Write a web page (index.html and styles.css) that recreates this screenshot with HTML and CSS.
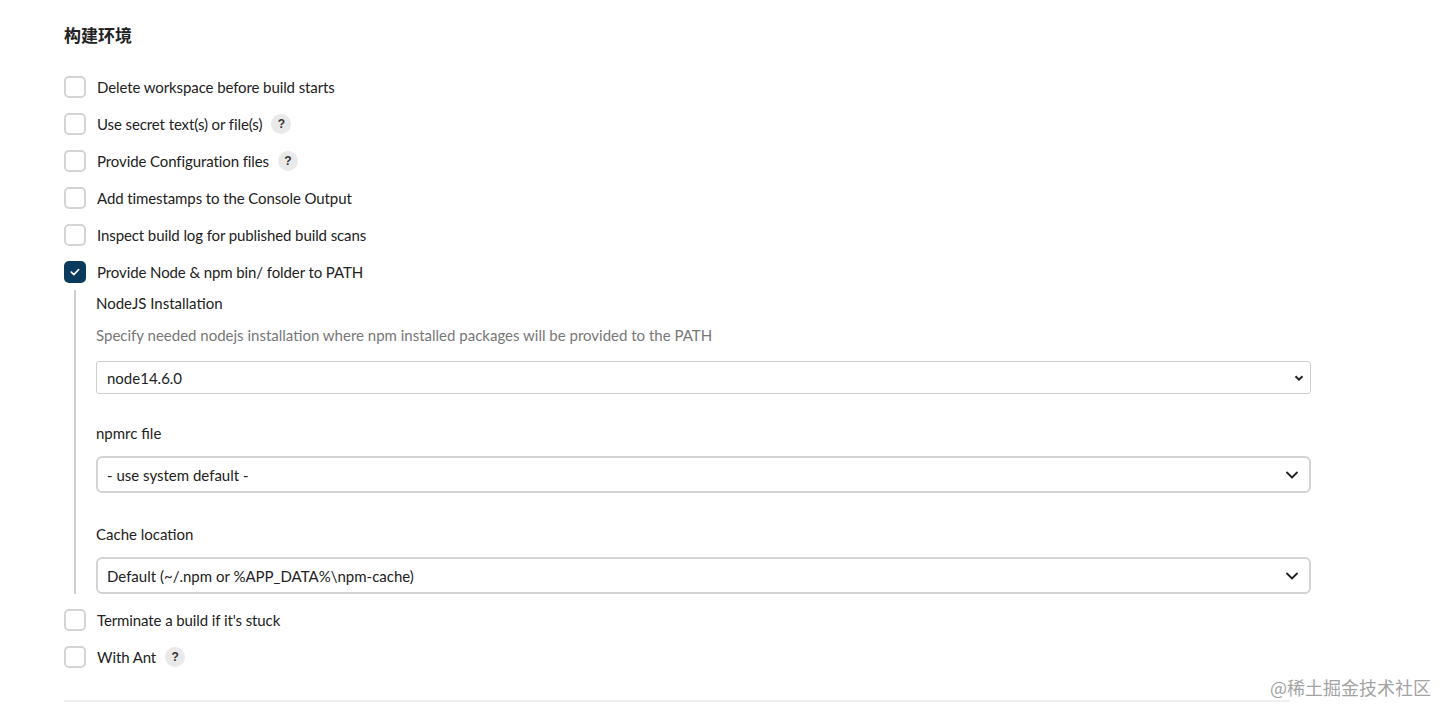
FILE: index.html
```html
<!DOCTYPE html>
<html lang="zh">
<head>
<meta charset="utf-8">
<title>构建环境</title>
<link rel="stylesheet" href="styles.css">
</head>
<body>
<div class="page">
  <h2 class="section-title">构建环境</h2>
  <div class="options">
    <div class="opt"><span class="cb"></span><span class="label">Delete workspace before build starts</span></div>
    <div class="opt"><span class="cb"></span><span class="label">Use secret text(s) or file(s)</span><span class="help">?</span></div>
    <div class="opt"><span class="cb"></span><span class="label">Provide Configuration files</span><span class="help">?</span></div>
    <div class="opt"><span class="cb"></span><span class="label">Add timestamps to the Console Output</span></div>
    <div class="opt"><span class="cb"></span><span class="label">Inspect build log for published build scans</span></div>
    <div class="opt"><span class="cb checked"><svg viewBox="0 0 22 22" width="22" height="22"><path d="M6.5 11.2 L9.6 14.2 L15.5 8" fill="none" stroke="#fff" stroke-width="2" stroke-linecap="round" stroke-linejoin="round"/></svg></span><span class="label">Provide Node &amp; npm bin/ folder to PATH</span></div>
    <div class="nested">
      <div class="field-title">NodeJS Installation</div>
      <div class="field-desc">Specify needed nodejs installation where npm installed packages will be provided to the PATH</div>
      <div class="select small"><span>node14.6.0</span><svg viewBox="0 0 10 10" width="10" height="10"><path d="M1.5 3.2 L5 6.7 L8.5 3.2" fill="none" stroke="#222" stroke-width="2"/></svg></div>
      <div class="field-title gap">npmrc file</div>
      <div class="select"><span>- use system default -</span><svg viewBox="0 0 14 14" width="14" height="14"><path d="M2 4.5 L7 9.5 L12 4.5" fill="none" stroke="#222" stroke-width="1.8" stroke-linecap="round" stroke-linejoin="round"/></svg></div>
      <div class="field-title gap gap-lg">Cache location</div>
      <div class="select"><span>Default (~/.npm or %APP_DATA%\npm-cache)</span><svg viewBox="0 0 14 14" width="14" height="14"><path d="M2 4.5 L7 9.5 L12 4.5" fill="none" stroke="#222" stroke-width="1.8" stroke-linecap="round" stroke-linejoin="round"/></svg></div>
    </div>
    <div class="opt"><span class="cb"></span><span class="label">Terminate a build if it's stuck</span></div>
    <div class="opt"><span class="cb"></span><span class="label">With Ant</span><span class="help">?</span></div>
  </div>
  <div class="footer-line"></div>
</div>
<div class="watermark">@稀土掘金技术社区</div>
</body>
</html>
```
FILE: styles.css
```css
html, body {
  margin: 0;
  padding: 0;
  background: #fff;
}
body {
  font-family: Lato, "Noto Sans CJK SC", sans-serif;
  color: #222;
  width: 1451px;
  height: 717px;
  overflow: hidden;
  position: relative;
}
.page {
  padding: 22px 0 0 64px;
  width: 1248px;
}
.section-title {
  margin: 0 0 20px 0;
  font-family: "Noto Sans CJK SC", sans-serif;
  font-size: 17px;
  font-weight: 700;
  color: #222;
  line-height: 26px;
}
.options {
  display: flex;
  flex-direction: column;
}
.opt {
  display: flex;
  align-items: center;
  height: 37px;
}
.cb {
  width: 18px;
  height: 18px;
  border: 2px solid #d4d4d4;
  border-radius: 5px;
  box-sizing: content-box;
  flex: none;
  display: flex;
  align-items: center;
  justify-content: center;
}
.cb.checked {
  background: #0b3b5c;
  border-color: #0b3b5c;
}
.cb.checked svg {
  width: 20px;
  height: 20px;
}
.label {
  margin-left: 11px;
  font-size: 15px;
  letter-spacing: -0.1px;
  color: #222;
}
.help {
  margin-left: 9px;
  width: 20px;
  height: 20px;
  border-radius: 50%;
  background: #e9e9e9;
  color: #333;
  font-family: "Liberation Sans", sans-serif;
  font-weight: 700;
  font-size: 12px;
  display: flex;
  align-items: center;
  justify-content: center;
}
.nested {
  margin-left: 10px;
  border-left: 2px solid #d0d0d0;
  padding-left: 20px;
  padding-top: 3px;
  padding-bottom: 0;
  margin-bottom: 7px;
}
.field-title {
  font-size: 15px;
  line-height: 20px;
  color: #222;
}
.field-title.gap {
  margin-top: 29px;
  margin-bottom: 13px;
}
.field-title.gap-lg {
  margin-top: 31px;
}
.field-desc {
  margin-top: 12px;
  margin-bottom: 16px;
  font-size: 15px;
  line-height: 20px;
  color: #777;
}
.select {
  width: 1215px;
  box-sizing: border-box;
  height: 37px;
  border: 2px solid #d3d3d3;
  border-radius: 6px;
  display: flex;
  align-items: center;
  justify-content: space-between;
  padding: 0 10px 0 9px;
  font-size: 15px;
  color: #222;
}
.select.small {
  height: 33px;
  border: 1px solid #cfcfcf;
  border-radius: 3px;
  padding: 0 6px 0 10px;
}
.footer-line {
  margin-top: 25px;
  height: 2px;
  background: #efefef;
  width: 1226px;
}
.watermark {
  position: absolute;
  left: 1270px;
  top: 674px;
  font-family: "Noto Sans CJK SC", sans-serif;
  font-size: 18px;
  color: #a3a3a3;
}
```
